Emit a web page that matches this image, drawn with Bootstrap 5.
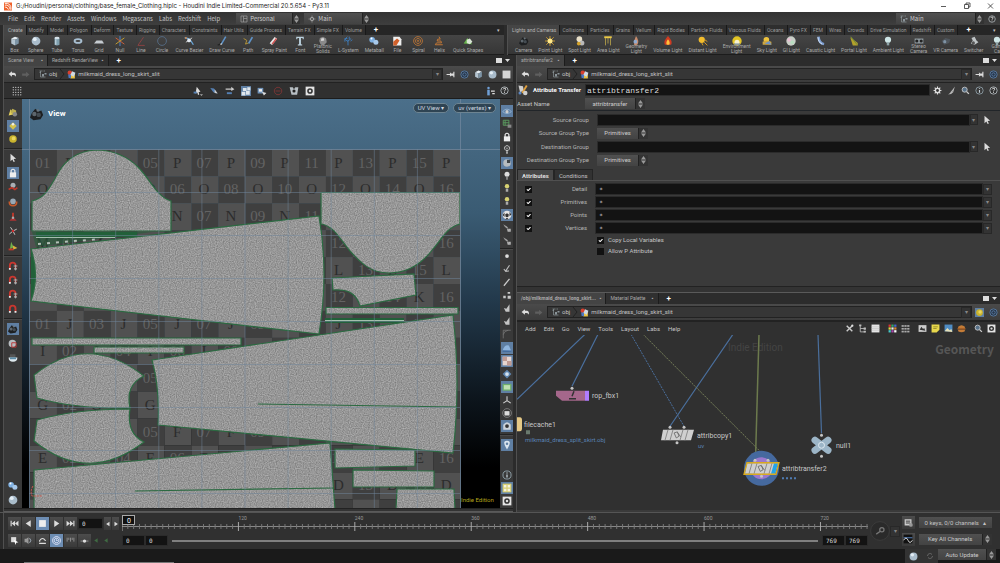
<!DOCTYPE html>
<html lang="en" data-bs-theme="dark">
<head>
<meta charset="utf-8">
<meta name="viewport" content="width=device-width, initial-scale=1">
<title>Houdini Indie Limited-Commercial</title>
<link href="https://cdn.jsdelivr.net/npm/bootstrap@5.3.0/dist/css/bootstrap.min.css" rel="stylesheet">
<style>
:root{--ui:#3a3a3a;--deep:#131313;--ink:#c4c4c4;--dim:#999;--sel:#5f7fa3}
body{font-family:Roboto,"Noto Sans",sans-serif;font-size:6px;line-height:8px;color:var(--ink);background:var(--ui);min-height:100vh;overflow:hidden}
a{color:inherit;text-decoration:none}
svg{display:block;flex:none}
button.btn{font-size:inherit;line-height:inherit;color:inherit;border-radius:0;padding:0;border:0;--bs-btn-hover-color:#fff}
.titlebar{background:#fff;color:#222;height:12px;font-family:Inter,sans-serif}
.menubar{height:13px;background:linear-gradient(#333,#3e3e3e);font-family:"Noto Sans CJK SC",sans-serif}
.menus{gap:6px}
.drop{background:linear-gradient(#505050,#434343);color:#ccc;height:11px}
.drop select{appearance:none;background:none;border:0;color:inherit;font-size:inherit;line-height:10px;padding:0 2px;width:100%;outline:0}
.drop .step{background:#333;width:12px;height:100%;border-left:1px solid #222}
.tabs{background:#262626;height:10px;font-size:5px;line-height:10px}
.tabs a{padding:0 3px 0 2px;border-right:1px solid #191919;background:#2e2e2e;color:var(--dim);white-space:nowrap}
.tabs a:first-child{padding-left:4px}
.tabs a.on{background:#454545;color:#b5b5b5}
.tools{height:20px;background:linear-gradient(#454545,#363636);font-size:5px;line-height:6px;color:#aaa;border-bottom:1px solid #1c1c1c;overflow:hidden}
.tools button.btn{min-width:21px;padding:1px 3px 0;display:flex;flex-direction:column;align-items:center;gap:1px;white-space:nowrap;flex:none}
.tools .two{line-height:5px}
.tools .two svg{margin-bottom:-3px}
.panetabs{background:#2c2c2c;height:11px;font-size:5px;line-height:11px;flex:none}
.panetabs a{padding:0 4px;color:#aaa;border-right:1px solid #1c1c1c;background:#303030}
.panetabs a.on{background:#444}
.plus{font-size:8px;color:#fff;font-weight:700}
.path{height:17px;background:linear-gradient(#4a4a4a,#3c3c3c);flex:none;border-bottom:1px solid #222}
.crumb{background:#363636;border:1px solid #222;height:12px;line-height:10px;gap:2px}
.dd{width:10px;height:11px;background:#333;border:1px solid #282828;color:#888;display:flex;align-items:center;justify-content:center}
.bar{background:#303030;height:16px;flex:none;border-bottom:1px solid #1c1c1c}
.gutter{width:4px;background:#2b2b2b;border-right:1px solid #505050;flex:none}
.leftcol{width:51.3%;flex:none}
.shelfleft{width:50.4%;flex:none}
.splitter{height:4px;background:#333;border-top:1px solid #222;border-bottom:1px solid #5a5a5a;flex:none}
.splitter.wide{height:7px}
.vtool{background:#393939;flex:none;position:relative}
.vtool button.btn{width:12px;height:12px;display:flex;align-items:center;justify-content:center}
.picked{background:var(--sel)!important}
.sep{height:1px;background:#222;width:100%;border-bottom:1px solid #484848;box-sizing:content-box}
.view{background:linear-gradient(#4b6f8a 0,#43657e 14%,#3a5b73 28%,#22384a 50%,#0c141b 74%,#000 90%)}
button.btn.pill{background:#2f4453;border:1px solid #6d8492;border-radius:6px;color:#d3dbe1;height:10px;line-height:8px;padding:0 4px}
.viewtitle{font-size:8px;font-weight:700;color:#fff}
.field{background:var(--deep);border:1px solid #2b2b2b;border-radius:0;height:12px;min-height:0;padding:0 3px;font:6px/10px "DejaVu Sans Mono",monospace;color:#ddd;min-width:0}
.field:focus{background:#000;box-shadow:none}
.field.big{font-size:8px;padding:0 1px;font-family:"Liberation Mono",monospace}
.form-check-input.tick{width:7px;height:7px;margin:0;border:0;border-radius:0;background-color:#111;float:none;background-size:7px;flex:none}
.form-check-input.tick:checked{background-color:#111}
.lab{width:72px;flex:none;text-align:right;color:#b4b4b4}
.tick+.lab{width:55px}
.params{padding-top:2px}
.ptabs{border-bottom:1px solid #505050;height:12px;line-height:11px;margin-top:2px}
.ptabs a{padding:0 4px;border:1px solid #252525;border-bottom:0;background:#323232}
.ptabs a.on{background:#484848;font-weight:700;color:#ddd}
.netmenu{height:14px;background:#303030;border-top:1px solid #222;flex:none}
.net{background:#303030}
.timeline{background:#303030;height:37px;border-top:1px solid #555;flex:none}
.play{width:13px;height:13px;background:linear-gradient(#4c4c4c,#3a3a3a)!important;display:flex;align-items:center;justify-content:center}
.play.thin{width:7px}
.play.picked{background:#6d8db3!important}
.num{height:11px;width:23px;font-size:6px}
.status{height:14px;background:#1a1a1a;flex:none}
.range{height:2px;background:#808080}
.panes{flex:232 1 0}.netpane{flex:217 1 0}
</style>
</head>
<body class="d-flex flex-column">
<header class="titlebar d-flex align-items-center gap-1 px-1 flex-shrink-0">
  <svg width="8" height="9" viewBox="0 0 9 9"><rect width="9" height="9" fill="#f0622a"/><path d="M1 3q5-1 6 5M1 5q3 0 4 3M1 1q7-1 7 7" stroke="#fff" fill="none"/></svg>
  <span class="flex-grow-1">G:/Houdini/personal/clothing/base_female_Clothing.hiplc - Houdini Indie Limited-Commercial 20.5.654 - Py3.11</span>
  <svg width="60" height="10" viewBox="0 0 60 10" fill="none" stroke="#333"><path d="M5 5.500h5M28.500 3.500h4v4h-4zM30 3.500V2h4v4h-1.500M52 2.500l5 5M57 2.500l-5 5" stroke-width=".8"/></svg>
</header>
<nav class="menubar d-flex align-items-center flex-shrink-0">
  <div class="menus d-flex ps-2 me-3" id="mainmenu"></div>
  <div class="drop d-flex align-items-center" id="deskA"></div>
  <div class="drop d-flex align-items-center ms-1" id="deskB"></div>
  <div class="drop d-flex align-items-center ms-auto" id="deskC"></div>
  <button class="btn mx-1" aria-label="Help" data-i="help" data-s="8"></button>
</nav>
<section class="d-flex flex-shrink-0">
  <div class="shelfleft d-flex">
    <div class="gutter"></div>
    <div class="flex-grow-1 overflow-hidden"><div class="tabs d-flex" id="st1"></div><div class="tools d-flex" id="sh1"></div></div>
  </div>
  <div class="gutter"></div>
  <div class="flex-grow-1 overflow-hidden"><div class="tabs d-flex" id="st2"></div><div class="tools d-flex ps-1" id="sh2"></div></div>
</section>
<main class="d-flex flex-grow-1">
  <section class="leftcol d-flex">
    <div class="gutter"></div>
    <div class="d-flex flex-column flex-grow-1">
      <div class="panetabs d-flex"><a class="on" href="#">Scene View &nbsp; &nbsp;&nbsp; ▪</a><a href="#">Redshift RenderView &nbsp; ▪</a><span class="ps-2 plus">+</span><svg class="ms-auto my-auto" width="22" height="7" viewBox="0 0 22 7" fill="#ddd"><path d="M5 1h6v5H5zM14 2h5l-2.500 3z"/></svg></div>
      <div class="path d-flex align-items-center" data-path="left"></div>
      <div class="bar d-flex align-items-center ps-1" id="vbar"></div>
      <div class="d-flex flex-grow-1">
        <div class="vtool d-flex flex-column align-items-center" id="vl" style="width:18px"></div>
        <div class="view flex-grow-1 position-relative overflow-hidden">
          <svg class="position-absolute w-100 h-100" viewBox="22 100 478 409" preserveAspectRatio="xMidYMid slice" id="uv"></svg>
          <div class="position-absolute d-flex align-items-center viewtitle start-0 top-0 p-2 gap-1"><span data-i="cam" data-s="14"></span>View</div>
          <div class="position-absolute top-0 end-0 d-flex gap-1 pt-1 me-1"><button class="btn pill">UV View ▾</button><button class="btn pill">uv (vertex) ▾</button></div>
        </div>
        <div class="vtool d-flex flex-column align-items-center" id="vr" style="width:13px"></div>
      </div>
      <div class="splitter"></div>
    </div>
  </section>
  <div class="gutter"></div>
  <section class="d-flex flex-column flex-grow-1">
    <div class="panes d-flex flex-column">
      <div class="panetabs d-flex"><a class="on" href="#">attribtransfer2 &nbsp;&nbsp; ▪</a><span class="ps-2 plus">+</span><svg class="ms-auto my-auto" width="22" height="7" viewBox="0 0 22 7" fill="#ddd"><path d="M5 1h6v5H5zM14 2h5l-2.500 3z"/></svg></div>
      <div class="path d-flex align-items-center" data-path="right"></div>
      <div class="d-flex align-items-center" style="height:14px"><span data-i="xfer" data-s="12"></span><b class="text-nowrap px-1 text-light">Attribute Transfer</b><input class="form-control field big flex-grow-1" aria-label="Node name" value="attribtransfer2">
        <div class="d-flex justify-content-around flex-shrink-0" style="width:70px"><button class="btn" aria-label="Gear" data-i="gear" data-s="9"></button><button class="btn" aria-label="Brush" data-i="brush" data-s="9"></button><button class="btn" aria-label="Find" data-i="find" data-s="9"></button><button class="btn" aria-label="Info" data-i="info" data-s="9"></button><button class="btn" aria-label="Help" data-i="help" data-s="9"></button></div></div>
      <div class="d-flex align-items-center border-bottom border-dark" style="height:14px"><label for="asset" style="width:68px">Asset Name</label><div class="drop d-flex align-items-center" id="asset_w"></div></div>
      <div class="d-flex flex-column params" id="groups"></div>
      <div class="ptabs d-flex"><a class="on" href="#">Attributes</a><a href="#">Conditions</a></div>
      <div class="d-flex flex-column params" style="gap:1px" id="attrs"></div>
    </div>
    <div class="splitter wide"></div>
    <div class="netpane d-flex flex-column">
      <div class="panetabs d-flex"><a class="on fw-bold" href="#">/obj/milkmaid_dress_long_skirt... &nbsp; ▪</a><a href="#">Material Palette &nbsp;&nbsp;&nbsp; ▪</a><span class="ps-2 plus">+</span><svg class="ms-auto my-auto" width="22" height="7" viewBox="0 0 22 7" fill="#ddd"><path d="M5 1h6v5H5zM14 2h5l-2.500 3z"/></svg></div>
      <div class="path d-flex align-items-center" data-path="net"></div>
      <div class="netmenu d-flex align-items-center ps-2" id="netmenu"></div>
      <div class="net flex-grow-1 position-relative overflow-hidden"><svg class="position-absolute w-100 h-100" viewBox="517 335 483 176" preserveAspectRatio="xMidYMid slice" id="graph"></svg></div>
    </div>
    <div class="flex-shrink-0" style="height:2px"></div>
  </section>
</main>
<footer class="flex-shrink-0">
  <div class="timeline d-flex">
    <div class="gutter"></div>
    <div class="flex-grow-1 d-flex flex-column ps-1 justify-content-evenly">
      <div class="d-flex align-items-center"><div class="d-flex align-items-center" id="play" style="gap:1px;width:114px"></div><svg class="flex-grow-1" height="17" id="ruler" style="width:0"></svg></div>
      <div class="d-flex align-items-center"><div class="d-flex align-items-center" id="play2" style="gap:1px;width:114px"></div><input class="form-control field num" value="0" aria-label="Start"><input class="form-control field num me-1" value="0" aria-label="Range start"><div class="range flex-grow-1"></div><input class="form-control field num ms-1" value="769" aria-label="Range end"><input class="form-control field num" value="769" aria-label="End"></div>
    </div>
    <div class="d-flex align-items-center justify-content-center" style="width:34px"><button class="btn rounded-circle" aria-label="Key" data-i="key" data-s="20"></button><span class="dd">▾</span></div>
    <div class="d-flex flex-column justify-content-evenly pe-2" style="width:98px">
      <div class="d-flex align-items-center gap-1"><button class="btn play" aria-label="Channels" data-i="sheet" data-s="10"></button><button class="btn drop flex-grow-1 text-center text-nowrap">0 keys, 0/0 channels &nbsp; ▴</button></div>
      <div class="d-flex align-items-center gap-1"><button class="btn play" aria-label="Scoped" data-i="wave" data-s="10"></button><div class="drop d-flex flex-grow-1" id="keyall"></div></div>
    </div>
  </div>
  <div class="status d-flex align-items-stretch"><div class="ms-4 align-self-end" style="width:15%;height:1px;background:#777"></div><div class="ms-auto d-flex align-items-center gap-2 px-1" style="background:#333"><span data-i="sphere" data-s="9"></span><span data-i="ring" data-s="8"></span></div><div class="drop d-flex me-1" id="autou"></div></div>
</footer>
<script src="https://cdn.jsdelivr.net/npm/bootstrap@5.3.0/dist/js/bootstrap.bundle.min.js"></script>
<script>
const ln=(d,c='#ddd',w=1.5)=>`<path d="${d}" fill="none" stroke="${c}" stroke-width="${w}"/>`;
const fl=(d,c='#ddd')=>`<path d="${d}" fill="${c}"/>`;
const ci=(x,y,r,c='#ddd')=>`<circle cx="${x}" cy="${y}" r="${r}" fill="${c}"/>`;
const magnet=ln('M3 12V7a4.500 4.500 0 0 1 9 0v5','#c8372f',3)+fl('M1.500 11h3v3h-3zM10.500 11h3v3h-3z','#eee');
const I={
box:fl('M2 4l6-3 6 2-6 3z','#e4ecf2')+fl('M2 4l6 2v9l-6-3z','#b3c3cf')+fl('M8 6l6-3v9l-6 3z','#7c93a5'),
sphere:ci(8,8,7,'#a9bccb')+ci(6,5,3,'#e3edf4'),
tube:fl('M4 3h8v11q-4 2-8 0z','#7f9fae')+'<ellipse cx="8" cy="3" rx="4" ry="2" fill="#d5e2e9"/>'+fl('M5 5h2v9H5z','#bfd2dc'),
torus:'<ellipse cx="8" cy="8" rx="5.500" ry="3" fill="none" stroke="#a9c0d2" stroke-width="3"/>',
grid:fl('M4 7h9l3 5H0z','#c6ccd1'),
nul:ln('M8 0v16','#4c85d0')+ln('M1 3l14 10','#d0603a')+ln('M15 3L1 13','#c8a02f'),
line:ln('M3 15L12 2M3 15h11','#a14444',1.2),
circle:ln('M8 1a7 7 0 1 0 .1 0z','#5b7795',1.2),
bez:ln('M1 3q8-1 14 11','#6aa6d8',2)+ln('M3 10L13 3','#ccc')+ci(8,7,3,'#dfe6ee')+ci(3,3,1.500,'#db8b49'),
pen:ln('M1 14q5 1 5-5','#222',2)+ln('M7 13L14 1','#5f93c8',2.5)+ln('M6 14l1-2','#eee',2),
path:ln('M1 4l5 3-2 6 5-2','#c9a437',1.3)+ln('M9 12L15 2','#5f93c8',2.500),
spray:ln('M3 13L11 3','#e9e9e9',5)+ln('M5 13L12 4','#d15454',2.500),
font:fl('M2 1h12v4h-1.500L12 3H9.500v10l2 .5V15h-7v-1.500l2-.5V3H4l-.5 2H2z','#bcd2df'),
plat:fl('M3 3l5-2 5 3 1 6-5 5-5-2-2-5z','#8a8a8a')+fl('M5 4l4-1 1 4-5 1z','#d8d8d8'),
lsys:ln('M8 15V6M8 9L3 5M8 8l5-4M3 9V4h4M10 5V1M12 8l3-2M5 3l2-2','#3d7ab8',1.500),
meta:ci(5,6,4.500,'#7fb1e3')+ci(11,10,4,'#a7c8ea')+ci(4,4,1.500,'#fff'),
file:fl('M2 1h10l3 4v10H2z','#eee')+fl('M2 9l6-5 4 3-5 8H2z','#d0602b'),
spiral:ln('M8 1a7 7 0 1 0 .1 0zM8 4a4 4 0 1 0 .1 0zM8 7a1 1 0 1 0 .1 0z','#c77a35',1.300),
helix:ln('M8 1l2 4H6l-1 3h6l1 3H4l-2 3h12','#c77a35',1.500),
quick:fl('M1 12l6-9 4 6 4 4z','#66b34a')+fl('M6 6l5-2 4 5-4 4-5-2z','#d9e5d5'),
cam:fl('M2 7l4-5 4 3 3-1 2 5-3 5-8 1-4-3z','#1d1f21')+ci(5,8,2.500,'#5d666d')+ci(10,9,2.500,'#444c52')+ci(9,4,1.500,'#69737b'),
point:ln('M8 0v16M0 8h16M2 2l12 12M14 2L2 14','#d9a52c',1.300)+ci(8,8,4,'#ffe98a'),
spot:ci(7,5,4.500,'#e8dfc8')+ci(11,11,4,'#b9b9b9')+ci(6,12,3,'#d4a32c'),
area:ln('M2 2h12','#eecb45',3)+ln('M4 3v12M8 3v9M12 3v12','#c6ad4b',1.200),
geo:fl('M8 0q6 8 2 14l-5 1Q4 7 8 0z','#c98d6d')+ci(7,9,3,'#8faad0'),
vol:fl('M8 0q8 8 5 14H3Q0 8 8 0z','#cf3b22')+fl('M8 5q4 5 2 9H6q-2-4 2-9z','#ffc23c'),
dist:ci(6,6,5,'#f2bc2d')+ln('M10 10l5 5M11 6l4 3M6 11l2 4','#d99c20'),
env:ci(8,8,7.500,'#e2c424')+ci(8,10,4,'#f4f0d0')+fl('M3 12h10v2H3z','#6d84a0'),
sky:ci(7,6,4.500,'#eec23c')+fl('M1 9q6-3 14 0v5H1z','#cfa741')+fl('M4 12l8-4 3 6z','#6f93c4'),
gi:ci(8,8,7.500,'#c9cfc7')+ci(5,6,3,'#e9c1d4')+ci(10,10,3,'#b8dcc0'),
caus:ln('M4 1q1 11 9 12','#7c9dd0',4)+ln('M3 2q1 9 7 11','#dbe7f7',1.500),
port:fl('M2 2l12 9v4H6z','#b4a12b')+ln('M3 1l10 13','#6f8c37'),
bulb:ci(8,6,5,'#cfe6e6')+fl('M6 10h4v5H6z','#8fa5a8'),
stereo:fl('M1 4h14v8H1z','#8d979d')+ci(4.500,8,2.500,'#222')+ci(11.500,8,2.500,'#222'),
vr:fl('M1 8l6-5 8 2-2 6-8 3z','#4f565d')+ci(6,9,2.500,'#7f93a5'),
sw:fl('M4 3l5-2 3 6 3 3-6 4-6-2 3-5z','#bfc4c6')+ci(7,11,2.500,'#555'),
help:'<circle cx="8" cy="8" r="6.500" fill="#303030" stroke="#b9c0c4" stroke-width="1.500"/>'+ln('M5.500 6q1-3 4-2 2 3-1.500 4.500v1M8 11v1.500','#e6e6e6',1.600),
info:'<circle cx="8" cy="8" r="6.500" fill="none" stroke="#9db0ba" stroke-width="1.300"/>'+ln('M8 7v5M8 4v1.500','#c6d2da',2),
find:'<circle cx="6.500" cy="6.500" r="4.500" fill="#58728a" stroke="#ccc" stroke-width="1.500"/>'+ln('M10 10l4 4','#ccc',2.500),
gear:ci(8,8,5)+ln('M8 1v14M1 8h14M3 3l10 10M13 3L3 13','#ddd',2)+ci(8,8,2.500,'#333'),
brush:fl('M14 1L8 9l3 2zM8 8l3 3q-3 4-9 4 4-2 6-7z','#b9b9b9'),
xfer:fl('M2 2l6 1 1 6-5 2z','#cfcfcf')+ln('M13 2L7 12','#e1a03d',2.500)+ci(11,12,3,'#cfcfcf')+ci(4,12,2,'#5c88c4'),
back:fl('M1 7l6-5v3h4q4 1 3 7-1-3-4-3H7v3z'),fwd:fl('M15 8L9 3v3H2v4h7v3z','#5f5f5f'),
obj:ln('M1 2h6M9 2h3M1 5h3M3 2v12h10','#8f9a9e',1.300)+fl('M6 8h4v5H6zM11 6h4v3h-4z','#8a9499'),
geom:ci(5,5,4,'#d8402f')+fl('M6 7h8v8H6z','#e9c243')+fl('M9 2l6 3-3 7-6-3z','#cfd9e4')+fl('M2 8h5v6H3z','#4b78c5'),
pin:fl('M1 7h6V4l2 2h4V3h2v10h-2v-3H9l-2 2V9H1z'),
targ:'<circle cx="8" cy="8" r="6.500" fill="#26364a" stroke="#5e7fa6" stroke-width="1.500"/><circle cx="8" cy="8" r="3" fill="none" stroke="#5e7fa6" stroke-width="1.500"/>',
sq:fl('M1 1h14v14H1z','#d6d6d6'),dots:[2,6,10,14].map(y=>[2,6,10,14].map(x=>ci(x,y,1)).join('')).join(''),
arr:fl('M4 1l9 8-4 .5 2 4-2 1-2-4-3 2.500z','#dcdcdc'),
arrc:fl('M6 1l6 8-3 .5 1 4-2 1-1-4-3 2z','#dcdcdc')+fl('M1 9h5v3H1z','#5480b5')+fl('M11 13h5l-2.500 3z','#aaa'),
arrb:fl('M2 3l6 1 5 8-6-2z','#5480b5')+fl('M9 5l5 7-5-1z','#ccc'),
mv:fl('M1 4h9V1l5 4-5 3V6H1z','#ccc')+fl('M3 10h8v3H3z','#5480b5'),
cubes:fl('M1 9h6v6H1zM8 8h6v6H8zM3 3h6v5H3zM10 2h5v5h-5z','#dfe6ec'),
sel:fl('M1 3h9v9H1z','#6f92b8')+fl('M3 5h5v4H3z','#eee')+fl('M8 9l7 2-4 4z','#ddd'),
no:ln('M8 2a6 6 0 1 0 .1 0zM4 8h8','#7b3535',1.500),
eyeb:fl('M1 2h5l2 3 2-3h5l-2 12H4z','#b8bfc4')+ci(8,8,2.500,'#222'),
wb:fl('M1 1h14v14H1z','#e4e4e4')+ci(8,8,4.500,'#333')+ci(8,8,2,'#ddd'),
man:ci(4,3,2,'#6fa0d8')+fl('M2 6h4v9H2z','#6fa0d8')+ln('M8 8h6M10 12h4','#ddd',2),
lamp:fl('M4 2l6 8-9 2z','#e5d05a')+fl('M7 1l6 3v5l-5 3-4-6z','#bcae50')+ci(11,10,3.500,'#888'),diam:fl('M8 2l6 6-6 6-6-6z','#d2c24c')+ci(8,5,2,'#eee'),
gold:ci(8,8,6,'#c9b32e')+ci(9,7,3,'#e9d65e'),
lock:fl('M3 7h10v8H3z','#eee')+ln('M5 8V4q3-4 6 0v4','#eee',1.800),
rb:ci(8,5,4,'#a9b0b5')+ln('M1 12l5-3 5 3 4-3','#c0392b',2.500),rb2:ci(8,7,4.500,'#98a8b5')+ln('M2 7q0 7 6 7t6-7','#c95a2b',2.500),
rb3:ln('M8 1v8','#c0392b',3)+fl('M2 14l6-6 6 6z','#a33')+ci(8,9,2,'#aaa'),
ax:ln('M8 8L4 2M8 8l6-3M8 8l-6 5M8 8l3 6','#ccc',1.500)+ci(8,8,2,'#c33'),
tri:fl('M5 1l4 9-6 3z','#6fae4c')+fl('M8 7l7 4-7 3z','#d8b33c')+fl('M1 12h8v3H1z','#c0392b'),
mag:magnet,magg:magnet+ln('M9 8h6M12 6v9','#aaa'),
dim:ci(8,8,6,'#b7bcc0')+fl('M8 3h5v5H8z','#3f4448'),dimr:ci(7,7,6,'#b7bcc0')+ln('M6 6h7v7H6z','#b33'),
bulb2:ci(8,5,4,'#ddd')+fl('M6.500 9h3v5h-3z','#888'),bulby:ci(8,5,3.500,'#d8d271')+fl('M6 9h4v5H6z','#aaa'),bulbx:ln('M8 1a4 4 0 1 0 .1 0z','#ccc',1.500)+ln('M6 4l4 3M10 4L6 7','#aaa',1)+fl('M6.500 10h3v4h-3z','#aaa'),
mesh:ln('M2 2h9v8H2zM5 2v8M2 6h9','#5b9a5f',1.500)+fl('M9 9h6v5H9z','#888'),
eye:ln('M1 9q7-8 14 0-7 6-14 0z','#8fb0d0',1.500)+ci(8,9,2.500,'#ccc'),ball:ci(8,8,7,'#e4e4e4')+fl('M8 5l3 2-1 4H6L5 7zM1 8l3-4v7zM12 3l3 4-3 3zM5 15l3-3 3 3z','#333'),
hand:fl('M3 8l4 1 5-7v12H6z','#c4c4c4'),curs:fl('M2 2l8 5-3 1zM8 9h6v5H9z','#b5b5b5')+ln('M3 4l9 8','#999',1),dot:ci(8,8,3),pt:ln('M12 2L6 11M3 8l3 4 5-1','#bbb',1.800),
pen2:ln('M3 14L12 3','#ccc',2),nums:fl('M2 9h4v4H2zM9 3h4v3H9zM9 9h5v5H9z','#c8c8c8'),
arc:ln('M2 15V2h12M2 9q1-6 8-7','#7a7a7a',1.200),blue:fl('M1 12q3-10 10-8l4 9z','#8fb5de')+fl('M1 12h14v2H1z','#3b6598'),
chk:fl('M1 1h14v14H1z','#e6d6d0')+fl('M1 1h7v7H1zM8 8h7v7H8z','#bf9b93'),
star:fl('M8 1l7 7-7 7-7-7z','#5f86b0')+ci(8,8,3,'#d6e2ee'),
grn:fl('M1 3h14v11H1z','#6fae6b')+fl('M3 5h10v7H3z','#bfe0b0'),yj:ln('M8 2v7l-6 4M8 9l6 4','#ccc',1.800),
ringsq:ln('M8 1a7 7 0 1 0 .1 0z','#888',1.300)+fl('M4 5h8v7H4z','#ddd'),
ghost:fl('M2 14V6q6-8 12 0v8z','#ccd3da')+ci(8,8,3,'#333'),cap:fl('M3 2h9v6H3z','#555')+fl('M1 7h14q0 7-7 7T1 7z','#dfe9ee')+fl('M3 7h10v3H3z','#5a8aa5'),
pinm:fl('M8 15q-9-14 0-14t0 14z','#dbe6ef')+ci(8,6,2,'#5f7fa3'),
win:fl('M1 1h14v14H1z','#d9cf74')+fl('M3 3h4v4H3zM9 3h4v4H9zM3 9h4v4H3zM9 9h4v4H9z','#f4f2df'),
wrench:ln('M3 3l10 10M13 3L3 13','#ccc',2.500)+ci(13,3,2),
tree:ln('M4 2v12h9M4 8h9','#bbb',1.500)+fl('M2 1h4v3H2zM10 6h4v4h-4zM10 12h4v3h-4z','#bbb'),
list:fl('M1 1h14v14H1z','#e6e6e6')+ln('M1 5h14M1 8h14M1 11h14','#bbb',1),
pal:['#d33','#3a6','#46c','#dd4','#eee','#d83','#4cc','#a4a','#fff'].map((c,i)=>`<rect x="${1+i%3*5}" y="${1+(i/3|0)*5}" width="4" height="4" fill="${c}"/>`).join(''),
pal2:Array.from({length:9},(_,i)=>`<rect x="${1+i%3*5}" y="${2+(i/3|0)*5}" width="4" height="3" fill="#aaa"/>`).join(''),
note:fl('M1 1h14v9l-5 5H1z','#e8d84c')+ln('M4 5h8M4 8h6','#7c7120',1.200),img:fl('M1 1h14v12H1z','#4f8cc4')+fl('M1 13l5-6 4 4 3-2 2 5z','#e5e0b8'),
shot:fl('M1 2h14v12H1z','#ccc')+fl('M3 10l3-5 3 4 2-2 2 5z','#333'),
brg:fl('M2 5q6-6 12 0v2H2zM2 10h12v3q-6 3-12 0z','#c47c37')+fl('M1 7h14v3H1z','#a55f26'),
sheet:fl('M1 2h11v10H1z','#ccc')+ln('M3 5h7M3 8h7','#333')+ci(11,11,3,'#999'),wave:fl('M1 1h14v14H1z','#111')+ln('M1 6h14','#5585c5')+ln('M1 10q4-7 7 0t7 0','#ddd'),
key:'<circle cx="8" cy="8" r="7.500" fill="#2a2a2a" stroke="#404040" stroke-width=".6"/><circle cx="9.500" cy="7" r="1.700" fill="none" stroke="#777"/><path d="M8.300 8.200L5 10.500" stroke="#777"/>',
ring:ln('M3 8a5 5 0 0 1 9-3M13 8a5 5 0 0 1-9 3','#666',2),
first:fl('M1 3h2v10H1zM9 3v10L3 8zM15 3v10L9 8z'),prev:fl('M12 2v12L3 8z'),stop:fl('M2 2h12v12H2z','#eee'),next:fl('M4 2v12l9-6z'),last:fl('M13 3h2v10h-2zM7 3v10l6-5zM1 3v10l6-5z'),
mouse:fl('M2 2h9v9H2z','#ddd')+fl('M7 7l8 4-4 1-1 4z','#fff'),
snd:fl('M1 5h3l4-3v12l-4-3H1z','#999')+ln('M10 4q4 4 0 8','#b7c6d4',1.500),loop:ln('M3 10V8q5-7 10 0v1M14 13H2','#ddd',2),clock:ln('M8 1a7 7 0 1 0 .1 0zM8 4a4 4 0 1 0 .1 0zM8 6v2h2','#eef',1.500),
tk:ln('M2 3v7M5 3v4M8 3v7M11 3v4M14 3v7','#999'),kf:ln('M1 9h14','#999')+ci(8,9,3),gk:fl('M10 4v8L4 8z','#3f6a42'),
desk:ln('M2 2h12v12H2zM7 2v12M7 7h7','#999',1.500),main:ln('M8 1v14M1 8h14','#999',1.500)+ci(8,8,4,'#aaa')+ci(8,8,2,'#444')
};
const ico=(n,s=9)=>`<svg width="${s}" height="${s}" viewBox="0 0 16 16" aria-hidden="true">${I[n]||''}</svg>`;
const $=id=>document.getElementById(id);
document.querySelectorAll('[data-i]').forEach(e=>{e.innerHTML=ico(e.dataset.i,e.dataset.s)});
const link=t=>`<a href="#">${t}</a>`;
$('mainmenu').innerHTML='File,Edit,Render,Assets,Windows,Megascans,Labs,Redshift,Help'.split(',').map(link).join('');
const step='<span class="step d-flex align-items-center justify-content-center"><svg width="5" height="8" viewBox="0 0 5 8" fill="#999"><path d="M0 3.500L2.500 0 5 3.500zM0 4.500h5L2.500 8z"/></svg></span>';
const drop=(id,w,label,txt,ic)=>{const e=$(id);e.innerHTML=(ic?`<span class="ps-1">${ico(ic,8)}</span>`:'')+`<select id="${id}_s" aria-label="${label}"><option>${txt}</option></select>`+step;e.style.width=w+'px'};
drop('deskA',64,'Desktop','Personal','desk');drop('deskB',66,'Radial menu','Main','main');drop('deskC',88,'Main shelf','Main','obj');
drop('asset_w',60,'Asset','attribtransfer');drop('keyall',76,'Key','Key All Channels');drop('autou',58,'Update','Auto Update');
$('asset_w_s').id='asset';
['asset','keyall_s','autou_s'].forEach(i=>$(i).classList.add('text-center'));
const tabs=(id,s)=>$(id).innerHTML=s.split(',').map((t,i)=>`<a href="#"${i?'':' class="on"'}>${t}</a>`).join('')+'<span class="ps-2 plus">+</span><span class="ms-auto pe-1">▾</span>';
tabs('st1','Create,Modify,Model,Polygon,Deform,Texture,Rigging,Characters,Constraints,Hair Utils,Guide Process,Terrain FX,Simple FX,Volume');
tabs('st2','Lights and Cameras,Collisions,Particles,Grains,Vellum,Rigid Bodies,Particle Fluids,Viscous Fluids,Oceans,Pyro FX,FEM,Wires,Crowds,Drive Simulation,Redshift,Custom');
const shelf=(id,a)=>$(id).innerHTML=a.split(',').map(s=>{const[t,i]=s.split(':');return`<button class="btn${t.includes('|')?' two':''}">${ico(i,10)}<span>${t.replace('|','<br>')}</span></button>`}).join('');
shelf('sh1','Box:box,Sphere:sphere,Tube:tube,Torus:torus,Grid:grid,Null:nul,Line:line,Circle:circle,Curve Bezier:bez,Draw Curve:pen,Path:path,Spray Paint:spray,Font:font,Platonic|Solids:plat,L-System:lsys,Metaball:meta,File:file,Spiral:spiral,Helix:helix,Quick Shapes:quick');
shelf('sh2','Camera:cam,Point Light:point,Spot Light:spot,Area Light:area,Geometry|Light:geo,Volume Light:vol,Distant Light:dist,Environment|Light:env,Sky Light:sky,GI Light:gi,Caustic Light:caus,Portal Light:port,Ambient Light:bulb,Stereo|Camera:stereo,VR Camera:vr,Switcher:sw,Gam|Ca:bulb');
document.querySelectorAll('[data-path]').forEach(e=>{const k=e.dataset.path;
 const b=(n,c='')=>`<button class="btn ${c}" aria-label="${n}">${ico(n,9)}</button>`;
 e.innerHTML=`<div class="d-flex gap-1 px-1">${b('back')}${b('fwd')}</div><div class="crumb d-flex align-items-center flex-grow-1 ps-1">${ico('obj',8)}${link('obj')}<svg width="6" height="10" viewBox="0 0 6 10"><path d="M1 0l4 5-4 5" fill="none" stroke="#222"/></svg>${ico('geom',9)}${link('milkmaid_dress_long_skirt_slit')}<span class="dd ms-auto">▾</span></div><div class="d-flex justify-content-around align-items-center" style="width:${k=='left'?70:28}px">${(k=='left'?['pin','targ','box','sphere','sq']:k=='right'?['pin','targ']:['gold','targ']).map(n=>b(n,n=='gold'?'picked':'')).join('')}</div>`});
$('vbar').innerHTML=`<button class="btn ms-1" aria-label="Grid">${ico('dots',10)}</button><div class="d-flex mx-auto" style="gap:6px">${['arrc','arrb','mv','cubes','sel','no','eyeb','wb'].map(n=>`<button class="btn ${n=='cubes'?'picked':''}" aria-label="${n}">${ico(n,10)}</button>`).join('')}</div><div class="d-flex gap-1 me-1">${ico('man',10)}${ico('help',9)}</div>`;
const vt=(id,y0,list)=>{let y=y0,h='';list.forEach(([cy,n,s])=>{if(n=='-'){h+=`<div class="sep" style="margin-top:${cy-y}px"></div>`;y=cy+2}else{h+=`<button class="btn ${s?'picked':''}" aria-label="${n}" style="margin-top:${cy-6-y}px">${ico(n,10)}</button>`;y=cy+6}});$(id).innerHTML=h};
vt('vl',100,[[114,'lamp'],[127,'diam',1],[140,'gold'],[149,'-'],[159,'arr'],[174,'lock',1],[188,'rb'],[203,'rb2'],[218,'rb3'],[232,'ax'],[247,'tri'],[256,'-'],[267,'magg'],[281,'magg'],[295,'magg'],[310,'mag'],[319,'-'],[330,'cam',1],[345,'dimr'],[359,'cap'],[487,'meta'],[501,'sphere']]);
vt('vr',100,[[112,'eye',1],[125,'mesh'],[138,'lock'],[151,'bulbx'],[164,'dim',1],[177,'bulb2'],[189,'bulby'],[202,'bulby'],[216,'ball',1],[229,'curs'],[242,'curs'],[249,'-'],[257,'dot'],[270,'pt'],[283,'pen2'],[296,'nums'],[309,'hand'],[322,'hand'],[335,'arc'],[349,'blue',1],[362,'chk',1],[375,'star'],[388,'grn',1],[401,'yj'],[414,'ringsq'],[427,'ghost',1],[435,'-'],[446,'pinm',1],[476,'info'],[489,'win',1],[502,'wb']]);
// parameters
$('groups').innerHTML=['Source','Destination'].map(g=>{const id=g.toLowerCase();return`<div class="d-flex align-items-center pe-1" style="height:13px"><label class="lab me-2" for="${id}">${g} Group</label><input class="form-control field flex-grow-1" id="${id}"><span class="dd">▾</span><span class="px-1">${ico('arr',10)}</span></div><div class="d-flex align-items-center" style="height:14px"><label class="lab me-2" for="t${id}_s">${g} Group Type</label><div class="drop d-flex" id="t${id}"></div></div>`}).join('');
['tsource','tdestination'].forEach(i=>{drop(i,51,'Group type','Primitives');$(i+'_s').classList.add('text-center')});
$('attrs').innerHTML=['Detail','Primitives','Points','Vertices'].map(t=>`<div class="d-flex align-items-center pe-2"><span style="width:10px"></span><input type="checkbox" class="form-check-input tick" checked aria-label="Transfer ${t}"><label class="lab me-2" for="a${t}">${t}</label><input class="form-control field flex-grow-1" id="a${t}" value="*"><span class="dd">▾</span></div>`).join('')+['Copy Local Variables','Allow P Attribute'].map((t,i)=>`<div class="d-flex align-items-center gap-1" style="margin-left:80px;height:10px"><input type="checkbox" id="c${i}" class="form-check-input tick" ${i?'':'checked'}><label for="c${i}">${t}</label></div>`).join('');
$('netmenu').innerHTML=`<div class="d-flex gap-2">${'Add,Edit,Go,View,Tools,Layout,Labs,Help'.split(',').map(link).join('')}</div><div class="ms-auto d-flex pe-1" style="gap:4px">${['wrench','tree','list','','pal','pal2','','shot','note','img','brg','','find','wb'].map(n=>n?`<button class="btn" aria-label="${n}">${ico(n,9)}</button>`:'<span></span>').join('')}</div>`;
const pb=(a,sel)=>a.map(n=>`<button class="btn play ${n==sel?'picked':''}" aria-label="${n}">${ico(n,9)}</button>`).join('');
$('play').innerHTML=pb(['first','prev','stop','next','last'],'stop')+'<input class="form-control field num" value="0" aria-label="Current frame" style="width:25px">'+`<button class="btn play thin" aria-label="Step back">${ico('prev',6)}</button><button class="btn play thin" aria-label="Step forward">${ico('next',6)}</button>`;
$('play2').innerHTML=pb(['mouse','snd','loop','clock','tk','kf'],'clock')+ico('gk',9)+ico('gk',9);
let r='';const pc=f=>(f/769*100).toFixed(3)+'%';
for(let f=0;f<769;f+=6){const M=f%120==0;r+=`<line x1="${pc(f)}" x2="${pc(f)}" y1="${M?7:9}" y2="${M?16:14}" stroke="${M?'#aaa':'#777'}"/>`;if(M&&f)r+=`<text x="${pc(f)}" y="5" font-size="5" fill="#999">${f}</text>`}
$('ruler').innerHTML=`<line x1="0" x2="100%" y1="11.500" y2="11.500" stroke="#888"/>${r}<rect x=".5" y=".5" width="12" height="9" fill="#111" stroke="#aaa"/><text x="5" y="8" font-size="7" fill="#fff">0</text>`;
// UV viewport
let s='<defs><filter id="grain" x="0" y="0" width="1" height="1" color-interpolation-filters="sRGB"><feTurbulence type="fractalNoise" baseFrequency=".85" numOctaves="1" seed="3"/><feColorMatrix values=".34 0 0 0 .42 .34 0 0 0 .42 .34 0 0 0 .42 0 0 0 0 1"/><feComposite in2="SourceGraphic" operator="in"/></filter></defs>';
const W=26.9,X=30,Y=150.5;
for(let y=0;y<14;y++)for(let x=0;x<16;x++){const num=(x+y)%2==0,n=String(x+1).padStart(2,'0');
 s+=`<rect x="${X+x*W}" y="${Y+y*W}" width="27" height="27" fill="${num?'#3f3f3f':'#515151'}"/>`;
 if(y<13)s+=`<text x="${X+(x+.47)*W}" y="${Y+y*W+18}" text-anchor="middle" font-size="15" font-family="Liberation Serif,serif" fill="${num?'#636363':'#2c2c2c'}">${num?n:'PONMLKJIHGFED'[y]}</text>`}
const P=['M32 202C49 198 53 180 62 168C72 155 86 151 99 151C115 152 128 158 138 168C150 180 157 198 171 202V232H32Z',
'M31 250L319 217Q329 275 319 335L31 302Q40 276 31 250Z','M321 193.500H460V225C447 228 441 241 433 250C424 262 410 274 389 274C370 274 360 263 350 252C340 240 334 227 321 225Z',
'M332 279L414 275L416 296L360 307C356 293 346 290 333 291Z','M326 308.500H458V315H326Z','M32 339H241V346H32Z','M94 348H184V354H94Z',
'M152 361L453 316Q461 385 453 454L158 426Q160 390 152 361Z','M34 376Q88 333 144 377Q125 386 130 409Q75 410 37 399Z','M37 421Q75 410 130 410Q126 434 144 443Q88 486 34 442Z',
'M34 471L330 444L335 510H34Z','M335 450L415 451V467L335 469Z','M353 471L434 472V488H353Z','M397 490H454L455 510H396Z'];
s+=`<g fill="#226039"><path d="M32 233H152L36 248Z" fill-opacity=".55"/><path d="M36 233H137V238H36Z"/><path d="M31 250Q43 276 31 302Z"/><path d="M325 319H404V324H325Z"/></g><path d="M36 238.500H115M325 321.500H404" stroke="#a5bfae"/><path d="M38 245L100 240" stroke="#b5c0b8" stroke-width="2" stroke-dasharray="3 6"/>`;
s+=`<g filter="url(#grain)">${P.map(d=>`<path d="${d}"/>`).join('')}</g><g fill="none" stroke="#2b6a41" stroke-width="1.200">${P.map(d=>`<path d="${d}"/>`).join('')}<path d="M258 405L457 408M135 492L334 489"/></g>`;
for(let i=0;i<11;i++)s+=`<path d="M${29.500+i*43.1} ${i%10?150:100}V509" stroke="#6f869c" stroke-opacity="${i%10?.5:.8}"/>`;
for(let i=0;i<9;i++)s+=`<path d="M${i?29:22} ${150.500+i*43}H${i?460:500}" stroke="#6f869c" stroke-opacity="${i?.5:.8}"/>`;
s+='<path d="M33 487q-3 5-1 10h10" fill="none" stroke="#d05a50" stroke-dasharray="2 1"/><text x="461" y="503" font-size="6" fill="#b3a41c">Indie Edition</text>';
$('uv').innerHTML=s;
// network graph
const dot=(x,y)=>ci(x,y,1.500,'#c4c4c4'),T=(x,y,t,c='#c8c8c8',z=7)=>`<text x="${x}" y="${y}" font-size="${z}" fill="${c}">${t}</text>`;
const slab=(x,y)=>fl(`M${x+2} ${y}H${x+33}L${x+30} ${y+10.500}H${x}Z`,'#cfcfcf')+[6,11,21,26].map(d=>ln(`M${x+d+1} ${y}l-3 10.500`,'#8b8b8b',1)).join('')+`<g transform="translate(${x+12} ${y+1}) scale(.55)">${ln('M2 4l6-2 3 8-5 3zM8 3l6 8','#666')}</g>`;
$('graph').innerHTML=T(728,352,'Indie Edition','#444',10)+`<text x="994" y="355" text-anchor="end" font-size="12" font-weight="700" font-family="Noto Sans CJK SC,sans-serif" fill="#565656">Geometry</text>`+
 ln('M585 335L517 400M598 335L572 387M733 335L670 427M818 335L821.500 434','#4a6f9d',1.200)+'<path d="M631 335L684 427" stroke="#4a6f9d" stroke-dasharray="2 1"/><path d="M643 335L768 460" stroke="#77805a" stroke-dasharray="2 1"/>'+ln('M759 335L755.500 460','#6c7a4d',1.500)+
 dot(572,389)+fl('M556 391.500h29v10h-23l-6-5z','#a5678b')+fl('M585 391.500h4v10h-4z','#b07cff')+ln('M574 392l-2 5M569 399.500h7','#333',1.500)+T(592,399,'rop_fbx1')+
 fl('M517 418h3q2 0 2 3v8q0 3-2 3h-3z','#e5c987')+T(524,428,'filecache1')+fl('M526 431h4v4h-4z','#6a7a6e')+T(525,443,'milkmaid_dress_split_skirt.obj','#5a83b4',6)+
 dot(670,428)+dot(684,428)+slab(661,430.500)+dot(677,443.500)+T(697,439,'attribcopy1')+T(698,449,'uv','#5a83b4',6)+
 ci(761.500,469,17.500,'#45699e')+ci(761.500,469,11,'#9a78cc')+dot(755,461)+dot(768,461)+slab(745,464)+fl('M774 464h4l-3 10.500h-4z','#22a5e8')+ln('M747 463.500H779L776 475H744Z','#d9ab1d',1.300)+dot(761.500,477)+T(782,472,'attribtransfer2')+[783,787,791,795].map(x=>fl(`M${x-1} 478h2v2h-2z`,'#4f7bb2')).join('')+
 dot(821.500,436)+'<path d="M815 441L828 451M828 441L815 451" stroke="#9cb5c7" stroke-width="7" stroke-linecap="round"/>'+'<circle cx="821.500" cy="446" r="3" fill="#9cb5c7" stroke="#dfe9f0"/>'+dot(821.500,457)+T(836,449,'null1');
</script>
</body>
</html>
